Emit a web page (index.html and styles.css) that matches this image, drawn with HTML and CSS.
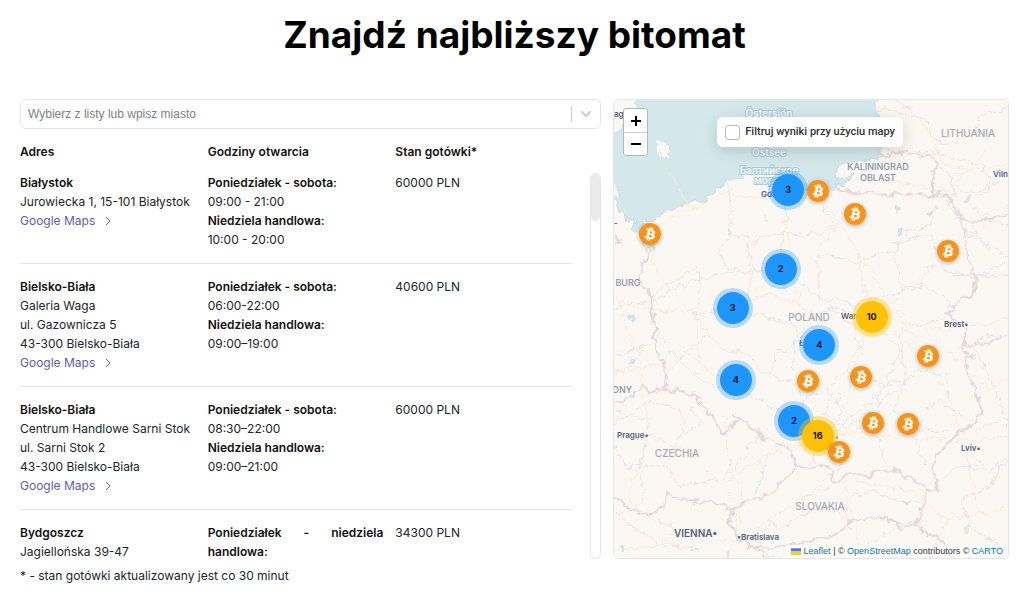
FILE: index.html
```html
<!DOCTYPE html>
<html lang="pl">
<head>
<meta charset="utf-8">
<meta name="viewport" content="width=device-width, initial-scale=1">
<title>Znajdź najbliższy bitomat</title>
<link rel="stylesheet" href="styles.css">
</head>
<body>
<svg class="sprite" aria-hidden="true">
  <symbol id="chevron-right" viewBox="0 0 8 10"><path d="M2 1l4 4-4 4"/></symbol>
  <symbol id="bitcoin" viewBox="0 0 32 32">
    <circle cx="16" cy="16" r="16" fill="#f7931a"/>
    <path fill="#fff" stroke="#fff" stroke-width=".5" d="M23.2 14c.3-2.100-1.300-3.200-3.500-4l.7-2.900-1.700-.4-.7 2.800-1.400-.3.700-2.800-1.700-.4-.7 2.800-3.500-.9-.5 1.900 1.300.3c.7.200.800.600.8 1l-2 7.900c-.1.200-.3.500-.8.400l-1.300-.3-.8 1.900 3.400.9-.7 2.900 1.700.4.700-2.900 1.400.4-.7 2.800 1.700.4.700-2.900c3 .6 5.200.3 6.100-2.300.8-2.200 0-3.400-1.500-4.300 1.100-.2 1.900-1 2.300-2.400zm-4 5.700c-.5 2.200-4.100 1-5.300.7l1-3.800c1.200.3 4.900.9 4.300 3.100zm.6-5.600c-.5 2-3.500 1-4.500.7l.8-3.400c1 .2 4.200.7 3.700 2.700z"/>
  </symbol>
</svg>

<main class="page">
  <h1 class="title">Znajdź najbliższy bitomat</h1>

  <div class="finder">
    <section class="panel">
      <div class="search">
        <input class="search-input" type="text" aria-label="Miasto" placeholder="Wybierz z listy lub wpisz miasto">
        <button class="search-toggle" type="button" aria-label="Pokaż listę">
          <svg viewBox="0 0 12 8"><path d="M2 2l4 4 4-4"/></svg>
        </button>
      </div>

      <div class="locations">
        <table class="table">
          <thead class="table-head">
            <tr class="row row-head"><th>Adres</th><th>Godziny otwarcia</th><th>Stan gotówki*</th></tr>
          </thead>
          <tbody class="table-body">
            <tr class="row">
              <td><b>Białystok</b><br>Jurowiecka 1, 15-101 Białystok<br><a class="maps" href="#mapa">Google Maps <svg><use href="#chevron-right"/></svg></a></td>
              <td class="hours"><b>Poniedziałek - sobota:</b><br>09:00 - 21:00<br><b>Niedziela handlowa:</b><br>10:00 - 20:00</td>
              <td>60000 PLN</td>
            </tr>
            <tr class="row">
              <td><b>Bielsko-Biała</b><br>Galeria Waga<br>ul. Gazownicza 5<br>43-300 Bielsko-Biała<br><a class="maps" href="#mapa">Google Maps <svg><use href="#chevron-right"/></svg></a></td>
              <td class="hours"><b>Poniedziałek - sobota:</b><br>06:00-22:00<br><b>Niedziela handlowa:</b><br>09:00–19:00</td>
              <td>40600 PLN</td>
            </tr>
            <tr class="row">
              <td><b>Bielsko-Biała</b><br>Centrum Handlowe Sarni Stok<br>ul. Sarni Stok 2<br>43-300 Bielsko-Biała<br><a class="maps" href="#mapa">Google Maps <svg><use href="#chevron-right"/></svg></a></td>
              <td class="hours"><b>Poniedziałek - sobota:</b><br>08:30–22:00<br><b>Niedziela handlowa:</b><br>09:00–21:00</td>
              <td>60000 PLN</td>
            </tr>
            <tr class="row">
              <td><b>Bydgoszcz</b><br>Jagiellońska 39-47</td>
              <td class="hours"><b>Poniedziałek - niedziela handlowa:</b></td>
              <td>34300 PLN</td>
            </tr>
          </tbody>
        </table>
        <div class="scrollbar" aria-hidden="true"><div class="scrollbar-thumb"></div></div>
      </div>
    </section>

    <section class="map" id="mapa" aria-label="Mapa bitomatów">
      <svg class="map-art" viewBox="614 99 394 459" preserveAspectRatio="xMidYMid slice">
        <defs>
          <filter id="jagged" filterUnits="userSpaceOnUse" x="604" y="90" width="414" height="479">
            <feTurbulence type="fractalNoise" baseFrequency="0.12" numOctaves="3" seed="4"/>
            <feDisplacementMap in="SourceGraphic" scale="11" xChannelSelector="R" yChannelSelector="G"/>
          </filter>
        </defs>
        <rect x="604" y="90" width="414" height="479" fill="#fbf8f3"/>
        <g filter="url(#jagged)">
          <path class="sea" d="M638 80H876L877 107 881 150V158L860 161 838 162 837 173 839 183 830 190 815 192 800 189 797 178 783 170 757 168 752 172 745 175 732 179 720 185 707 200 690 202 677 208 657 217 645 222 630 221 620 212 616 200 604 190V137L618 131 628 120 637 108Z"/>
          <path class="sea" d="M634 223l12 1 1 8-6 3-8-5zM650 244l5 1-2 6-4 1zM838 178l17-3-6 6-11 6z"/>
          <path class="land" d="M656 139l15 8-1 10-13-4zM604 178l14 8-1 10-13-2z"/>
          <g class="roads">
            <path d="M652 232C668 222 675 212 688 210S712 190 732 194 780 198 792 190M649 235C655 285 680 300 692 312S685 345 710 372L735 388 775 408 818 437 860 432 905 437 958 441 1010 437M614 296C650 320 690 305 731 311S780 318 819 344M788 189C785 240 795 280 805 330L812 380 797 420M872 317L948 253 1010 205M872 317C900 315 925 330 958 328L1010 319M872 317L857 251 824 200M872 317C860 350 850 375 841 437M872 317L925 355 950 400 966 449"/>
            <path d="M648 435C675 445 700 460 721 484S742 508 738 540M648 435L627 500 670 535 712 540M721 484L770 452 818 437M648 435L640 360 620 310M614 375L690 355 735 388M738 540L798 500 845 480 910 490 946 520 1005 508M712 540L738 540 775 565M614 550L680 540M946 520L930 565M966 449L1000 480M966 449L980 520M845 480L860 555M878 107L920 117 945 165 980 170 1010 162M888 180L950 190 985 150M915 320L990 390 1010 375M690 210L670 170M733 308L781 269 788 189M857 251L927 355"/>
          </g>
          <g class="rivers">
            <path d="M644 224L646 255 637 275 654 300 652 325 672 350 690 370 712 385 745 390 775 410M654 300L690 280 735 270 782 269 814 295 840 310 870 320M788 190L782 250 784 290M814 295L860 305 890 295 925 285 948 300 952 315M872 320L900 350 885 385 861 410 820 436M694 315L735 308 770 317 798 325 792 370M835 435L870 410 920 370 945 375 950 400M614 410L650 420 640 465 644 500 620 515M690 405L700 425 675 440M737 540L735 510 755 495 765 460 790 435M738 540L780 560M825 440L840 415 838 390M890 245L930 235 945 270 975 278 1008 260M950 180L970 195 1000 180M960 165L945 195 965 230 990 250"/>
            <path d="M925 410L915 438 927 465M941 480L960 465 990 470 1008 455M798 505L830 475 850 455M865 545L900 525 930 520"/>
          </g>
          <path class="lake" d="M894 204l7 3-1 6-5-2zM895 230l9-2-2 5-6 1zM929 212l3-2 1 4-4 2zM965 197l6-1-1 5-3 2zM729 229l3 1-1 5-2-1zM765 215l2 4-3 2zM630 314l5 1-1 7-4-2zM632 358l4 1-1 4-4-2zM743 133l2 3M618 546l6-1v8l-5-1zM728 550l4-1-3 9-4-2zM905 502l6-1-2 4-5 1zM968 355l7 1-2 3-5-1z"/>
          <path class="forest" d="M966 528l3-3 1 5-5 4zM984 534l6 3 3 5-8-3z"/>
          <g class="regions">
            <path d="M727 182L731 205 731 235 720 250 728 268 752 273 747 302 770 295 798 303 812 315 800 340 775 355 770 375 792 380 804 398 830 388 845 370 860 345 850 322 832 308 812 315M731 235L760 240 785 232 812 235 836 225 822 205 830 195M700 272L697 318 710 335 725 350 750 352 758 368 770 375M752 273L748 245 760 240M698 268L665 285 653 295M666 373L695 345 710 335M836 225L818 253 820 300M895 250L857 262 818 253M895 250L900 285 920 285 928 265 952 270M895 250L905 232 930 225 935 205M901 352L902 328 950 320M901 352L906 378 880 385 862 370M906 378L895 410 910 430 950 430M880 385L875 430 887 468M830 388L825 415 845 425 875 430M804 398L800 425 820 440 810 465"/>
            <path d="M614 425L650 400 680 410 683 435 665 465 625 465 614 445M665 465L680 485 720 480 730 470 725 415M728 470L740 485 745 505M770 430L750 445 735 470M614 510L625 520 660 545 700 550M660 520L680 530M800 515L780 530 770 520 760 545M800 515L830 505 845 520M845 497L875 490 905 505 925 497M845 497L850 530M963 500L990 485 1000 465 1010 460M963 500L970 530 995 540 1008 558M925 410L940 400 975 425M895 100L925 118 928 130 945 145 975 135 980 115 1008 108M885 150L905 155 930 150 960 160 985 165 990 190 965 200 990 220 1008 225M932 160L950 175 955 195 938 195M614 310L635 300 652 303M614 355L650 345M960 350L990 335 1008 335M975 350L1000 400 1008 430M955 275L1008 275M970 220L980 240 1008 255M645 345L625 370 614 372M975 430L1000 420M875 107L905 115 925 118"/>
          </g>
          <g class="borders">
            <path d="M645 237L646 260 637 278 653 295 652 313 655 327 655 350 665 367 666 373 665 390 687 392 700 402 725 434 738 420 733 415 755 430 767 440 788 446 797 465 810 470 822 463 830 468 834 482 850 471 867 476 878 470 897 470 920 484 939 492 932 465 944 447 958 432 978 420 981 410 979 400 967 367 963 343 965 327 948 313 962 298 974 292 975 277 968 255 962 220 953 202 943 192 933 194"/>
            <path d="M665 387L650 393 641 385 630 397 614 405M832 190L870 193 933 195 933 176 938 165 932 155 918 154 900 150 882 156M962 220L984 220 1008 213M614 495L630 510 650 515 663 506 667 493 685 499 707 502 733 508 730 523 738 538 753 547 767 560M733 508L745 501 773 493 783 478 798 466M738 538L753 547 790 545 810 541 830 537 853 520 887 517 900 527 915 525 925 502 928 490M915 525L940 540 957 560M965 327L965 343 985 343 1008 334M614 235L620 240 614 245"/>
          </g>
        </g>
        <g class="sea-names">
          <text x="769" y="117">Östersjön</text>
          <text x="769" y="156">Ostsee</text>
          <text x="769" y="174">Балтийское</text>
          <text x="767" y="184">море</text>
        </g>
        <g class="countries">
          <text x="968" y="137">LITHUANIA</text>
          <text x="809" y="321">POLAND</text>
          <text x="677" y="457">CZECHIA</text>
          <text x="820" y="510">SLOVAKIA</text>
        </g>
        <g class="states">
          <text x="878" y="170">KALININGRAD</text>
          <text x="878" y="181">OBLAST</text>
          <text x="628" y="286">BURG</text>
          <text x="622" y="393">ONY</text>
        </g>
        <g class="cities">
          <text x="614" y="117">ag</text>
          <text x="614" y="226">-</text>
          <text x="761" y="197">Gda</text>
          <text x="993" y="177">Viln</text>
          <text x="841" y="319">War</text>
          <text x="944" y="327">Brest•</text>
          <text x="799" y="346">Ł</text>
          <text x="617" y="438">Prague•</text>
          <text x="961" y="451">Lviv•</text>
          <text x="737" y="540">•Bratislava</text>
          <text class="capital" x="674" y="537">VIENNA•</text>
          <circle cx="837" cy="437" r="1"/>
        </g>
      </svg>

      <button class="pin cluster" type="button" style="left:44.2%;top:19.6%"><span>3</span></button>
      <button class="pin coin" type="button" aria-label="Bitomat" style="left:51.8%;top:19.8%"><svg><use href="#bitcoin"/></svg></button>
      <button class="pin coin" type="button" aria-label="Bitomat" style="left:61.2%;top:24.8%"><svg><use href="#bitcoin"/></svg></button>
      <button class="pin coin" type="button" aria-label="Bitomat" style="left:9.1%;top:29.2%"><svg><use href="#bitcoin"/></svg></button>
      <button class="pin coin" type="button" aria-label="Bitomat" style="left:84.8%;top:33%"><svg><use href="#bitcoin"/></svg></button>
      <button class="pin cluster" type="button" style="left:42.3%;top:36.9%"><span>2</span></button>
      <button class="pin cluster" type="button" style="left:30.1%;top:45.4%"><span>3</span></button>
      <button class="pin cluster cluster-large" type="button" style="left:65.4%;top:47.5%"><span>10</span></button>
      <button class="pin cluster" type="button" style="left:52.1%;top:53.5%"><span>4</span></button>
      <button class="pin coin" type="button" aria-label="Bitomat" style="left:79.6%;top:56%"><svg><use href="#bitcoin"/></svg></button>
      <button class="pin cluster" type="button" style="left:30.9%;top:61.2%"><span>4</span></button>
      <button class="pin coin" type="button" aria-label="Bitomat" style="left:49.2%;top:61.4%"><svg><use href="#bitcoin"/></svg></button>
      <button class="pin coin" type="button" aria-label="Bitomat" style="left:62.6%;top:60.6%"><svg><use href="#bitcoin"/></svg></button>
      <button class="pin cluster" type="button" style="left:45.7%;top:70.1%"><span>2</span></button>
      <button class="pin cluster cluster-large" type="button" style="left:51.7%;top:73.4%"><span>16</span></button>
      <button class="pin coin" type="button" aria-label="Bitomat" style="left:65.8%;top:70.5%"><svg><use href="#bitcoin"/></svg></button>
      <button class="pin coin" type="button" aria-label="Bitomat" style="left:74.7%;top:70.7%"><svg><use href="#bitcoin"/></svg></button>
      <button class="pin coin" type="button" aria-label="Bitomat" style="left:57.2%;top:77%"><svg><use href="#bitcoin"/></svg></button>

      <div class="zoom">
        <button type="button" aria-label="Przybliż"><svg viewBox="0 0 10 10"><path d="M0 5h10M5 0v10"/></svg></button>
        <button type="button" aria-label="Oddal"><svg viewBox="0 0 10 10"><path d="M0 5h10"/></svg></button>
      </div>
      <label class="filter"><input type="checkbox">Filtruj wyniki przy użyciu mapy</label>
      <div class="attribution">
        <a href="#leaflet"><svg viewBox="0 0 12 8"><path fill="#4c7be1" d="M0 0h12v4H0z"/><path fill="#ffd500" d="M0 4h12v3H0z"/><path fill="#e0bc00" d="M0 7h12v1H0z"/></svg> Leaflet</a>
        | © <a href="#osm">OpenStreetMap</a> contributors © <a href="#carto">CARTO</a>
      </div>
    </section>
  </div>

  <p class="note">* - stan gotówki aktualizowany jest co 30 minut</p>
</main>
</body>
</html>
```
FILE: styles.css
```css
* { box-sizing: border-box; }

body {
  margin: 0;
  background: #fff;
  color: #212529;
  font: 12px/19px Inter, "Liberation Sans", sans-serif;
}

button {
  padding: 0;
  border: 0;
  background: none;
  color: inherit;
  font: inherit;
  cursor: pointer;
}

a { text-decoration: none; }

b, th { color: #111; font-weight: 600; }

.sprite { position: absolute; width: 0; height: 0; }

.page { padding: 11px 15px 0 20px; }

.title {
  margin: 0 0 40px;
  color: #000;
  font-size: 37px;
  line-height: 48px;
  font-weight: 700;
  text-align: center;
}

.finder {
  display: grid;
  grid-template-columns: 581fr 396fr;
  grid-template-rows: 75vh;
  gap: 12px;
}

.panel { display: flex; flex-direction: column; min-width: 0; min-height: 0; }

.search {
  display: flex;
  align-items: center;
  flex: none;
  height: 30px;
  border: 1px solid #e6e6e6;
  border-radius: 6px;
}

.search-input {
  flex: 1;
  min-width: 0;
  padding: 0 7px;
  border: 0;
  outline: 0;
  background: none;
  font: 12px/20px "Liberation Sans", Arial, sans-serif;
}

.search-input::placeholder { color: #808080; opacity: 1; }

.search-toggle {
  display: flex;
  align-items: center;
  justify-content: center;
  width: 29px;
  height: 16px;
  border-left: 1px solid #ccc;
}

.search-toggle svg { width: 12px; height: 8px; fill: none; stroke: #ccc; stroke-width: 2; stroke-linecap: round; }

.locations {
  display: grid;
  grid-template-columns: minmax(0, 1fr) 11px;
  grid-template-rows: minmax(0, 1fr);
  gap: 18px;
  flex: 1;
  min-height: 0;
}

.table { display: flex; flex-direction: column; min-height: 0; }

.table-head { display: block; padding: 13px 0 12px; }

.table-body { display: block; flex: 1; min-height: 0; overflow-y: auto; scrollbar-width: none; }

.row {
  display: grid;
  grid-template-columns: 34% 34% 1fr;
  padding: 13px 0 14px;
  border-bottom: 1px solid #e6e6e6;
}

.row:first-child { padding-top: 0; }
.row:last-child { padding-bottom: 0; border-bottom: 0; }
.row th, .row td { padding: 0; text-align: left; }
.row .hours { padding-right: 12px; text-align: justify; }

.maps { color: #6060a8; }
.maps svg { width: 8px; height: 10px; margin-left: 5px; fill: none; stroke: currentColor; stroke-width: 1; vertical-align: -1px; }

.scrollbar { margin-top: 44px; border: 1px solid #e6e6e6; border-radius: 6px; }
.scrollbar-thumb { height: 47px; border-radius: 5px; background: #ebebeb; }

.note { margin: 7px 0 0; }

.map {
  position: relative;
  overflow: hidden;
  border: 1px solid #e6e6e6;
  border-radius: 6px;
}

.map-art { display: block; width: 100%; height: 100%; }
.map-art path { fill: none; stroke-linejoin: round; }
.map-art .sea { fill: #d4e8eb; stroke: #c5dde2; }
.map-art .land { fill: #fbf8f3; }
.map-art .lake { fill: #cde5ea; }
.map-art .forest { fill: #deecd0; }
.roads { stroke: #fbecd5; }
.rivers { stroke: #dbeaec; }
.regions { stroke: #f0e0e2; }
.borders { stroke: #ead5da; stroke-width: 2; }

.map-art text { font-family: Inter, sans-serif; }
.sea-names { fill: #f2fafc; stroke: #a6cbd6; stroke-width: 2; paint-order: stroke; font-size: 10px; font-weight: 600; text-anchor: middle; }
.countries { fill: #a3abb8; font-size: 10px; font-weight: 500; text-anchor: middle; }
.states { fill: #8491a6; font-size: 9px; font-weight: 500; text-anchor: middle; }
.cities { fill: #4d6282; stroke: #fbf8f3; stroke-width: 1; paint-order: stroke; font-size: 8px; font-weight: 600; }
.cities .capital { font-size: 10px; }

.pin { position: absolute; transform: translate(-50%, -50%); border-radius: 50%; }

.cluster { padding: 4px; background: rgba(30, 150, 255, 0.3); color: #111; font-size: 9px; font-weight: 700; }
.cluster span { display: block; width: 32px; border-radius: 50%; background: #1e96ff; line-height: 32px; }
.cluster-large { background: rgba(255, 193, 7, 0.4); }
.cluster-large span { background: #ffc107; }

.coin { width: 22px; height: 22px; box-shadow: 0 1px 4px rgba(0, 0, 0, 0.3); }
.coin svg { display: block; width: 22px; height: 22px; }

.zoom { position: absolute; top: 8px; left: 9px; border: 1px solid #b4b8ba; border-radius: 3px; background: #fff; }
.zoom button { display: grid; place-items: center; width: 23px; height: 23px; }
.zoom button + button { border-top: 1px solid #ccc; }
.zoom svg { width: 10px; height: 10px; stroke: #000; stroke-width: 2; }

.filter {
  position: absolute;
  top: 17px;
  right: 105px;
  display: flex;
  align-items: center;
  gap: 5px;
  height: 30px;
  padding: 0 8px;
  border-radius: 6px;
  background: #fff;
  box-shadow: 0 4px 16px rgba(0, 0, 0, 0.15);
  color: #333;
  font: 500 11px/16px Roboto, sans-serif;
  white-space: nowrap;
}

.filter input {
  appearance: none;
  width: 15px;
  height: 15px;
  margin: 0;
  border: 1px solid #bbb;
  border-radius: 3px;
}

.attribution {
  position: absolute;
  right: 0;
  bottom: 0;
  padding: 0 5px;
  background: rgba(255, 255, 255, 0.8);
  color: #333;
  font: 9px/13px "Liberation Sans", Arial, sans-serif;
  white-space: nowrap;
}

.attribution a { color: #0078a8; }
.attribution svg { width: 10px; height: 7px; vertical-align: -1px; }
```
